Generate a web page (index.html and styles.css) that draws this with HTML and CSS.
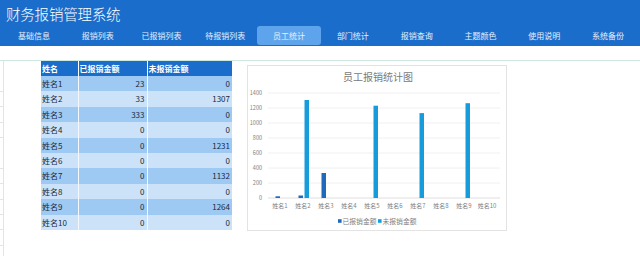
FILE: index.html
```html
<!DOCTYPE html>
<html lang="zh">
<head>
<meta charset="utf-8">
<title>财务报销管理系统</title>
<link rel="stylesheet" href="styles.css">
</head>
<body>
<header class="app-header">
  <div class="app-title">财务报销管理系统</div>
  <nav class="nav">
    <span class="nav-item">基础信息</span>
    <span class="nav-item">报销列表</span>
    <span class="nav-item">已报销列表</span>
    <span class="nav-item">待报销列表</span>
    <span class="nav-item active">员工统计</span>
    <span class="nav-item">部门统计</span>
    <span class="nav-item">报销查询</span>
    <span class="nav-item">主题颜色</span>
    <span class="nav-item">使用说明</span>
    <span class="nav-item">系统备份</span>
  </nav>
</header>
<div class="spacer"></div>
<main class="sheet">
  <div class="row-heads"></div>
  <table class="data">
    <colgroup><col class="w1"><col class="w2"><col class="w3"></colgroup>
    <thead>
      <tr><th>姓名</th><th>已报销金额</th><th>未报销金额</th></tr>
    </thead>
    <tbody>
      <tr class="odd"><td>姓名1</td><td class="num">23</td><td class="num">0</td></tr>
      <tr><td>姓名2</td><td class="num">33</td><td class="num">1307</td></tr>
      <tr class="odd"><td>姓名3</td><td class="num">333</td><td class="num">0</td></tr>
      <tr><td>姓名4</td><td class="num">0</td><td class="num">0</td></tr>
      <tr class="odd"><td>姓名5</td><td class="num">0</td><td class="num">1231</td></tr>
      <tr><td>姓名6</td><td class="num">0</td><td class="num">0</td></tr>
      <tr class="odd"><td>姓名7</td><td class="num">0</td><td class="num">1132</td></tr>
      <tr><td>姓名8</td><td class="num">0</td><td class="num">0</td></tr>
      <tr class="odd"><td>姓名9</td><td class="num">0</td><td class="num">1264</td></tr>
      <tr><td>姓名10</td><td class="num">0</td><td class="num">0</td></tr>
    </tbody>
  </table>
  <div class="chart">
    <svg width="258" height="164" viewBox="0 0 258 164" class="chart-svg">
      <text x="130" y="14.5" class="chart-title" text-anchor="middle">员工报销统计图</text>
      <g class="grid">
        <line x1="20" x2="252" y1="27" y2="27"/>
        <line x1="20" x2="252" y1="42" y2="42"/>
        <line x1="20" x2="252" y1="57" y2="57"/>
        <line x1="20" x2="252" y1="72" y2="72"/>
        <line x1="20" x2="252" y1="87" y2="87"/>
        <line x1="20" x2="252" y1="102" y2="102"/>
        <line x1="20" x2="252" y1="117" y2="117"/>
        <line x1="20" x2="252" y1="132" y2="132" class="axis"/>
      </g>
      <g class="ylab" text-anchor="end">
        <text x="14" y="29">1400</text>
        <text x="14" y="44">1200</text>
        <text x="14" y="59">1000</text>
        <text x="14" y="74">800</text>
        <text x="14" y="89">600</text>
        <text x="14" y="104">400</text>
        <text x="14" y="119">200</text>
        <text x="14" y="134">0</text>
      </g>
      <g class="bar-a">
        <rect x="27.5" y="130.3" width="4.5" height="1.7"/>
        <rect x="50.5" y="129.5" width="4.5" height="2.5"/>
        <rect x="73.5" y="107" width="4.5" height="25"/>
      </g>
      <g class="bar-b">
        <rect x="56.5" y="34" width="4.5" height="98"/>
        <rect x="125.5" y="39.7" width="4.5" height="92.3"/>
        <rect x="171.5" y="47.1" width="4.5" height="84.9"/>
        <rect x="217.5" y="37.2" width="4.5" height="94.8"/>
      </g>
      <g class="xlab" text-anchor="middle">
        <text x="32" y="141.5">姓名1</text>
        <text x="55" y="141.5">姓名2</text>
        <text x="78" y="141.5">姓名3</text>
        <text x="101" y="141.5">姓名4</text>
        <text x="124" y="141.5">姓名5</text>
        <text x="147" y="141.5">姓名6</text>
        <text x="170" y="141.5">姓名7</text>
        <text x="193" y="141.5">姓名8</text>
        <text x="216" y="141.5">姓名9</text>
        <text x="239" y="141.5">姓名10</text>
      </g>
      <g class="legend">
        <rect x="90" y="153.2" width="3.6" height="3.6" class="sw-a"/>
        <text x="94.5" y="157.5">已报销金额</text>
        <rect x="130" y="153.2" width="3.6" height="3.6" class="sw-b"/>
        <text x="134.5" y="157.5">未报销金额</text>
      </g>
    </svg>
  </div>
</main>
</body>
</html>
```

FILE: styles.css
```css
html, body {
  margin: 0;
  padding: 0;
}
body {
  width: 640px;
  height: 256px;
  overflow: hidden;
  background: #ffffff;
  font-family: "Noto Sans CJK SC", "Noto Sans", sans-serif;
}
.app-header {
  background: #1b6dcb;
  height: 46px;
  color: #ffffff;
}
.app-title {
  padding: 2px 0 0 6px;
  height: 23px;
  line-height: 23px;
  font-size: 14.5px;
  letter-spacing: -0.2px;
  font-weight: 300;
}
.nav {
  display: flex;
  padding-left: 2px;
  padding-top: 0.5px;
}
.nav-item {
  width: 64px;
  height: 19px;
  line-height: 19px;
  text-align: center;
  font-size: 8px;
  color: #e6f0fb;
  border-radius: 3px;
}
.nav-item.active {
  background: #5ea4ec;
}
.spacer {
  height: 14px;
}
.sheet {
  display: flex;
  align-items: flex-start;
  border-top: 1px solid #cde9df;
  height: 195px;
}
.row-heads {
  width: 3px;
  height: 195px;
  border-right: 1px solid #e4e4e4;
  background: repeating-linear-gradient(to bottom, transparent 0, transparent 14.5px, #e4e4e4 14.5px, #e4e4e4 15.4px);
}
.data {
  margin-left: 37px;
  border-collapse: collapse;
  table-layout: fixed;
  width: 191px;
  font-size: 8px;
  color: #1a2a3a;
}
.w1 { width: 37px; }
.w2 { width: 69px; }
.w3 { width: 85px; }
.data th {
  background: #1b6dcb;
  color: #ffffff;
  text-align: left;
  font-weight: bold;
  height: 15px;
  padding: 0 0 0 1px;
  line-height: 15px;
  border-right: 1px solid #ffffff;
  white-space: nowrap;
  overflow: hidden;
}
.data td {
  height: 15.4px;
  padding: 0 0 0 1px;
  line-height: 15.4px;
  background: #cbe2f8;
  border-right: 1px solid #f2f8fe;
  white-space: nowrap;
  overflow: hidden;
}
.data tr.odd td {
  background: #9ec9f3;
}
.data th:last-child,
.data td:last-child {
  border-right: none;
}
.data td.num {
  text-align: right;
  padding: 0 2px 0 0;
}
.chart {
  margin-left: 15px;
  margin-top: 4px;
  border: 1px solid #e3e3e3;
  width: 258px;
  height: 164px;
}
.chart-svg {
  display: block;
}
.chart-title {
  font-size: 10px;
  fill: #7a7a7a;
}
.grid line {
  stroke: #ececec;
  stroke-width: 0.8;
}
.grid line.axis {
  stroke: #d6d6d6;
}
.ylab text {
  font-size: 5.5px;
  fill: #7f7f7f;
}
.xlab text {
  font-size: 6px;
  fill: #7f7f7f;
}
.bar-a rect, .sw-a {
  fill: #2268bb;
}
.bar-b rect, .sw-b {
  fill: #179cdb;
}
.legend text {
  font-size: 6.8px;
  fill: #7f7f7f;
}
```
